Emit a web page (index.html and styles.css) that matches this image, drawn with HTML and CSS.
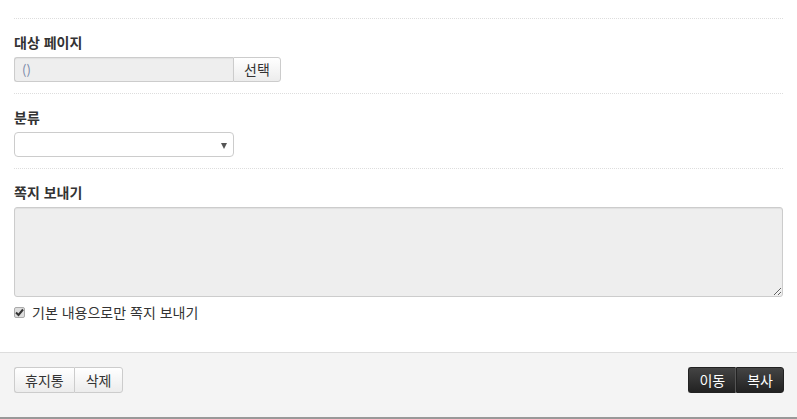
FILE: index.html
```html
<!DOCTYPE html>
<html lang="ko">
<head>
  <meta charset="UTF-8">
  <title>문서 관리</title>
  <link rel="stylesheet" href="styles.css">
</head>
<body>
  <div class="form">
    <div class="row">
      <label class="label">대상 페이지</label>
      <div class="input-group">
        <input class="text" type="text" value="()" readonly>
        <button class="btn" type="button">선택</button>
      </div>
    </div>

    <div class="row">
      <label class="label">분류</label>
      <div class="select">
        <span class="arrow"></span>
      </div>
    </div>

    <div class="row last">
      <label class="label">쪽지 보내기</label>
      <textarea class="area"></textarea>
      <label class="check">
        <span class="box">
          <svg width="9" height="9" viewBox="0 0 9 9"><path d="M1 4.5 L3.5 7 L8 1.5" fill="none" stroke="#333" stroke-width="2"/></svg>
        </span>
        기본 내용으로만 쪽지 보내기
      </label>
    </div>
  </div>

  <div class="footer">
    <div class="btn-group">
      <button class="btn" type="button">휴지통</button>
      <button class="btn" type="button">삭제</button>
    </div>
    <div class="btn-group dark">
      <button class="btn" type="button">이동</button>
      <button class="btn" type="button">복사</button>
    </div>
  </div>
</body>
</html>
```

FILE: styles.css
```css
body {
  margin: 0;
  font-family: "Noto Sans CJK KR", "Noto Sans", sans-serif;
  font-size: 14px;
  color: #333;
  background: #fff;
}

.form {
  padding: 18px 14px 0;
}

.row {
  border-top: 1px dotted #ddd;
  padding: 13px 0 11px;
}

.row.last {
  padding-bottom: 31px;
}

.label {
  display: block;
  font-weight: bold;
  font-size: 14px;
  line-height: 20px;
  margin-bottom: 5px;
}

.input-group {
  display: flex;
  height: 25px;
}

.text {
  box-sizing: border-box;
  width: 219px;
  height: 25px;
  margin: 0;
  padding: 0 7px;
  border: 1px solid #ccc;
  border-right: 0;
  border-radius: 3px 0 0 3px;
  background: #eee;
  color: #7a8aaa;
  font-family: inherit;
  font-size: 13px;
  box-shadow: inset 0 1px 1px rgba(0, 0, 0, .05);
}

.btn {
  box-sizing: border-box;
  height: 25px;
  margin: 0;
  padding: 0 11px;
  border: 1px solid #ccc;
  border-radius: 3px;
  background: linear-gradient(#fff, #ececec);
  color: #333;
  font-family: inherit;
  font-size: 14px;
  line-height: 23px;
}

.input-group .btn {
  width: 48px;
  padding: 0;
  border-radius: 0 3px 3px 0;
}

.select {
  box-sizing: border-box;
  position: relative;
  width: 220px;
  height: 25px;
  border: 1px solid #ccc;
  border-radius: 4px;
  background: #fff;
}

.arrow {
  position: absolute;
  right: 6px;
  top: 10px;
  border-left: 3px solid transparent;
  border-right: 3px solid transparent;
  border-top: 6px solid #555;
}

.area {
  display: block;
  box-sizing: border-box;
  width: 100%;
  height: 90px;
  margin: 0;
  border: 1px solid #ccc;
  border-radius: 3px;
  background: #eee;
  box-shadow: inset 0 1px 1px rgba(0, 0, 0, .06);
  resize: both;
}

.check {
  display: flex;
  align-items: center;
  gap: 7px;
  margin-top: 6px;
  line-height: 18px;
}

.box {
  box-sizing: border-box;
  display: flex;
  align-items: center;
  justify-content: center;
  width: 11px;
  height: 11px;
  border: 1px solid #aaa;
  border-radius: 2px;
  background: #ddd;
}

.footer {
  display: flex;
  justify-content: space-between;
  align-items: flex-start;
  height: 50px;
  padding: 14px 13px 0 14px;
  border-top: 1px solid #ddd;
  border-bottom: 2px solid #999;
  background: #f4f4f4;
}

.btn-group {
  display: flex;
  height: 26px;
}

.btn-group .btn {
  height: 26px;
  padding: 0 11px;
  border-radius: 0;
}

.btn-group .btn:first-child {
  padding: 0 10px;
  border-radius: 3px 0 0 3px;
  border-right: 0;
}

.btn-group .btn:last-child {
  border-radius: 0 3px 3px 0;
}

.btn-group.dark .btn {
  padding: 0 10px;
  border-color: #222;
  background: linear-gradient(#444, #222);
  color: #fff;
}

.btn-group.dark .btn:first-child {
  border-right: 1px solid #555;
}
```
